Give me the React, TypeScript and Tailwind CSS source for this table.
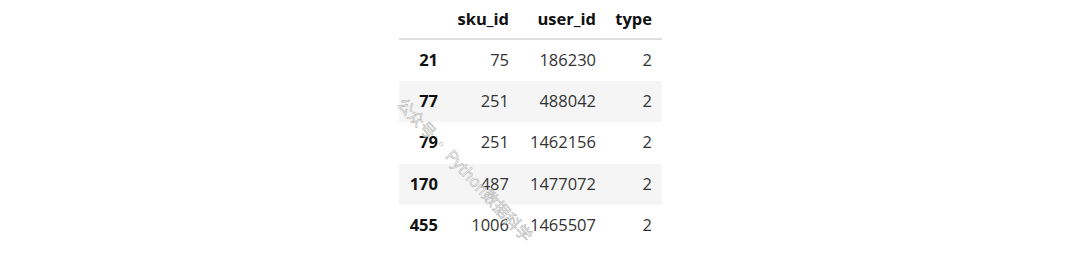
const rows = [
  { idx: "21", sku: "75", user: "186230", type: "2" },
  { idx: "77", sku: "251", user: "488042", type: "2" },
  { idx: "79", sku: "251", user: "1462156", type: "2" },
  { idx: "170", sku: "487", user: "1477072", type: "2" },
  { idx: "455", sku: "1006", user: "1465507", type: "2" },
];

export default function App() {
  return (
    <div className="h-[256px] w-[1080px] bg-white font-['Open_Sans','Liberation_Sans',sans-serif] text-[16.5px]">
      <div className="relative ml-[399px] w-[263px]">
        <table className="w-[263px] border-collapse">
          <thead>
            <tr className="h-[39px] border-b-2 border-[#dedede] text-[#111]">
              <th className="w-[49px] pr-[10px]" />
              <th className="w-[71px] pr-[10px] text-right font-bold">sku_id</th>
              <th className="w-[87px] pr-[10px] text-right font-bold">user_id</th>
              <th className="w-[56px] pr-[10px] text-right font-bold">type</th>
            </tr>
          </thead>
          <tbody>
            {rows.map((r, i) => (
              <tr key={r.idx} className={i % 2 === 1 ? "h-[41.5px] bg-[#f5f5f5]" : "h-[41.5px] bg-white"}>
                <td className="pr-[10px] text-right font-bold text-[#111]">{r.idx}</td>
                <td className="pr-[10px] text-right text-[#333]">{r.sku}</td>
                <td className="pr-[10px] text-right text-[#333]">{r.user}</td>
                <td className="pr-[10px] text-right text-[#333]">{r.type}</td>
              </tr>
            ))}
          </tbody>
        </table>
        <span className="pointer-events-none absolute left-[2px] top-[88px] origin-left rotate-[47deg] whitespace-nowrap font-['Noto_Sans_CJK_SC',sans-serif] text-[16px] text-white/70 [-webkit-text-stroke:0.6px_#b8b8b8]">
          公众号 · Python数据科学
        </span>
      </div>
    </div>
  );
}
